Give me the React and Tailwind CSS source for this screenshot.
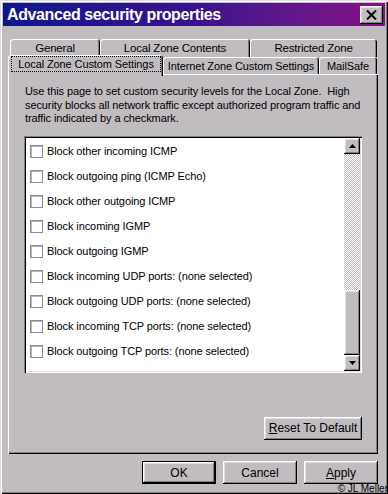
import React from "react";

const rows = [
  "Block other incoming ICMP",
  "Block outgoing ping (ICMP Echo)",
  "Block other outgoing ICMP",
  "Block incoming IGMP",
  "Block outgoing IGMP",
  "Block incoming UDP ports: (none selected)",
  "Block outgoing UDP ports: (none selected)",
  "Block incoming TCP ports: (none selected)",
  "Block outgoing TCP ports: (none selected)",
];

const raised =
  "shadow-[inset_-1px_-1px_0_#000,inset_1px_1px_0_#fff,inset_-2px_-2px_0_#808080,inset_2px_2px_0_#dfdfdf]";
const tabShadow =
  "shadow-[inset_1px_1px_0_#fff,inset_-1px_0_0_#000,inset_-2px_0_0_#808080]";

function Arrow({ down }) {
  return (
    <svg width="7" height="4" viewBox="0 0 7 4">
      {down ? <polygon points="0,0 7,0 3.5,4" fill="#000" /> : <polygon points="0,4 7,4 3.5,0" fill="#000" />}
    </svg>
  );
}

function Btn({ children, className = "" }) {
  return (
    <div className={`flex items-center justify-center text-[12px] whitespace-nowrap ${className}`}>{children}</div>
  );
}

export default function App() {
  return (
    <div className="relative w-[388px] h-[494px] overflow-hidden bg-[#c0bcc0] p-[3px] text-black font-['Liberation_Sans',Arial,sans-serif] shadow-[inset_1px_1px_0_#dfdfdf,inset_2px_2px_0_#fff,inset_-1px_-1px_0_#000,inset_-2px_-2px_0_#808080]">
      {/* Title bar */}
      <div className="h-[23px] flex items-center justify-between bg-linear-to-r from-[#0a168e] via-[#3a108c] to-[#860c86] pl-[4px] pr-[2px]">
        <span className="pt-[1px] text-white font-bold text-[16px] tracking-[-0.4px] leading-none whitespace-nowrap">
          Advanced security properties
        </span>
        <div className={`w-[23px] h-[18px] bg-[#c0bcc0] flex items-center justify-center ${raised}`}>
          <svg width="11" height="10" viewBox="0 0 11 10">
            <path d="M1 0.5 L10 9.5 M10 0.5 L1 9.5" stroke="#000" strokeWidth="2" />
          </svg>
        </div>
      </div>

      {/* Tabs + panel */}
      <div className="ml-[5px] mt-[13px]">
        <div className="flex h-[18px] pl-[2px] text-[11.5px] tracking-[-0.2px] whitespace-nowrap">
          <div className={`w-[90px] h-[18px] flex items-center justify-center pt-[1px] rounded-t-[3px] ${tabShadow}`}>General</div>
          <div className={`w-[150px] h-[18px] flex items-center justify-center pt-[1px] rounded-t-[3px] ${tabShadow}`}>Local Zone Contents</div>
          <div className={`w-[127px] h-[18px] flex items-center justify-center pt-[1px] rounded-t-[3px] ${tabShadow}`}>Restricted Zone</div>
        </div>
        <div className="relative z-10 flex items-end h-[19px] -mt-[2px] text-[11px] tracking-[-0.1px] whitespace-nowrap">
          <div className={`relative z-10 w-[155px] h-[21px] -mb-[2px] bg-[#c0bcc0] rounded-t-[3px] pt-[1px] ${tabShadow}`}>
            <div className="ml-[3px] mr-[2px] h-[16px] border border-dotted border-black flex items-center justify-center leading-none">
              Local Zone Custom Settings
            </div>
          </div>
          <div className={`w-[156px] h-[17px] flex items-center justify-center pt-[2px] rounded-t-[3px] ${tabShadow}`}>Internet Zone Custom Settings</div>
          <div className={`w-[58px] h-[17px] flex items-center justify-center pt-[2px] rounded-t-[3px] ${tabShadow}`}>MailSafe</div>
        </div>

        {/* Panel */}
        <div className="w-[370px] h-[380px] pt-[11px] pl-[16px] flex flex-col shadow-[inset_1px_1px_0_#fff,inset_-1px_-1px_0_#000,inset_-2px_-2px_0_#808080]">
          <p className="ml-[1px] text-[11px] leading-[13.5px] tracking-[-0.1px] whitespace-nowrap">
            Use this page to set custom security levels for the Local Zone.&nbsp; High
            <br />
            security blocks all network traffic except authorized program traffic and
            <br />
            traffic indicated by a checkmark.
          </p>

          <div className="mt-[10px] w-[338px] h-[237px] bg-white p-[2px] flex shadow-[inset_1px_1px_0_#808080,inset_2px_2px_0_#000,inset_-1px_-1px_0_#fff,inset_-2px_-2px_0_#dfdfdf]">
            <div className="flex-1 pt-[1px]">
              {rows.map((r) => (
                <div key={r} className="h-[25px] flex items-center">
                  <div className="ml-[4px] w-[13px] h-[13px] bg-white border border-[#8c8a8c] shadow-[inset_1px_1px_0_#b8b6b8]" />
                  <span className="ml-[4px] text-[11px] tracking-[-0.1px] leading-none whitespace-nowrap">{r}</span>
                </div>
              ))}
            </div>
            <div className="w-[16px] flex flex-col">
              <div className={`h-[16px] bg-[#c0bcc0] flex items-center justify-center ${raised}`}>
                <Arrow />
              </div>
              <div className="flex-1 bg-[image:repeating-conic-gradient(#c0bcc0_0%_25%,#ffffff_0%_50%)] bg-[length:2px_2px]" />
              <div className={`h-[65px] bg-[#c0bcc0] ${raised}`} />
              <div className={`h-[16px] bg-[#c0bcc0] flex items-center justify-center ${raised}`}>
                <Arrow down />
              </div>
            </div>
          </div>

          <div className="w-[338px] flex justify-end mt-[44px]">
            <Btn className={`w-[98px] h-[23px] ${raised}`}>
              <span>
                <span className="underline">R</span>eset To Default
              </span>
            </Btn>
          </div>
        </div>
      </div>

      {/* Bottom buttons */}
      <div className="mt-[7px] ml-[139px] flex gap-[7px]">
        <Btn className="w-[74px] h-[23px] shadow-[inset_0_0_0_1px_#000,inset_-2px_-2px_0_#000,inset_2px_2px_0_#fff,inset_-3px_-3px_0_#808080,inset_3px_3px_0_#dfdfdf]">
          OK
        </Btn>
        <Btn className={`w-[74px] h-[23px] ${raised}`}>Cancel</Btn>
        <Btn className={`w-[74px] h-[23px] ${raised}`}>
          <span>
            <span className="underline">A</span>pply
          </span>
        </Btn>
      </div>

      <div className="absolute right-0 bottom-0 text-[10px] leading-[10px] text-black whitespace-nowrap">© JL Meller</div>
    </div>
  );
}
